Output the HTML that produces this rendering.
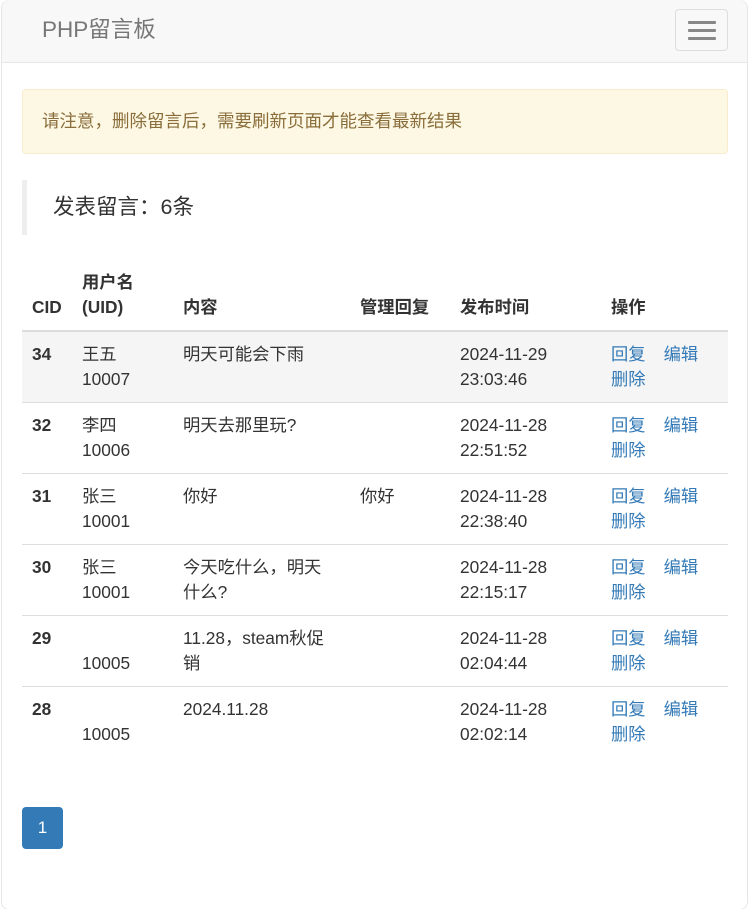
<!DOCTYPE html>
<html><head><meta charset="utf-8"><style>
*{box-sizing:border-box;margin:0;padding:0}
html,body{width:749px;height:909px;overflow:hidden;background:#fff}
body{font-family:"Liberation Sans","Noto Sans CJK SC",sans-serif;font-size:17.3px;color:#333;position:relative}
.frame{position:absolute;left:1px;top:0;width:747px;height:910px;border:1px solid #e6e6e6;border-radius:8px;overflow:hidden}
.nav{position:absolute;left:2px;top:0;width:745px;height:63px;background:#f8f8f8;border-bottom:1px solid #e7e7e7;border-radius:8px 8px 0 0}
.brand{position:absolute;left:40px;top:16px;font-size:22.5px;color:#777;line-height:28px}
.tog{position:absolute;left:673px;top:9px;width:53px;height:42px;border:1px solid #ddd;border-radius:4px}
.tog i{position:absolute;left:12px;width:28px;height:3px;background:#888;border-radius:1px}
.alert{position:absolute;left:22px;top:89px;width:706px;height:65px;background:#fcf8e3;border:1px solid #faebcc;border-radius:4px;color:#8a6d3b;padding:20px 19px;line-height:22px;font-size:17.5px;white-space:nowrap}
.bq{position:absolute;left:22px;top:180px;height:55px;width:300px;border-left:5px solid #eee;padding-left:26px;font-size:21.5px;line-height:55px}
.c{position:absolute;line-height:25px;white-space:nowrap}
.h{font-weight:bold}
.ln{position:absolute;left:22px;width:706px;height:1px;background:#ddd}
a{color:#337ab7;text-decoration:none}
.pg{position:absolute;left:22px;top:807px;width:41px;height:42px;background:#337ab7;border-radius:4px;color:#fff;text-align:center;line-height:42px;font-size:17px}
</style></head><body>
<div class="frame"></div>
<div class="nav"><div class="brand">PHP留言板</div><div class="tog"><i style="top:11px"></i><i style="top:19px"></i><i style="top:27px"></i></div></div>
<div class="alert">请注意，删除留言后，需要刷新页面才能查看最新结果</div>
<div class="bq">发表留言：6条</div>

<div class="c h" style="left:32px;top:295px">CID</div>
<div class="c h" style="left:82px;top:270px">用户名<br>(UID)</div>
<div class="c h" style="left:183px;top:295px">内容</div>
<div class="c h" style="left:360px;top:295px">管理回复</div>
<div class="c h" style="left:460px;top:295px">发布时间</div>
<div class="c h" style="left:611px;top:295px">操作</div>
<div class="ln" style="top:330px;height:2px"></div>
<div style="position:absolute;left:22px;top:332px;width:706px;height:70px;background:#f5f5f5"></div>

<div class="c h" style="left:32px;top:342px">34</div>
<div class="c" style="left:82px;top:342px">王五<br>10007</div>
<div class="c" style="left:183px;top:342px">明天可能会下雨</div>
<div class="c" style="left:460px;top:342px">2024-11-29<br>23:03:46</div>
<div class="c" style="left:611px;top:342px"><a>回复</a><a style="margin-left:18px">编辑</a><br><a>删除</a></div>
<div class="ln" style="top:402px"></div>

<div class="c h" style="left:32px;top:413px">32</div>
<div class="c" style="left:82px;top:413px">李四<br>10006</div>
<div class="c" style="left:183px;top:413px">明天去那里玩?</div>
<div class="c" style="left:460px;top:413px">2024-11-28<br>22:51:52</div>
<div class="c" style="left:611px;top:413px"><a>回复</a><a style="margin-left:18px">编辑</a><br><a>删除</a></div>
<div class="ln" style="top:473px"></div>

<div class="c h" style="left:32px;top:484px">31</div>
<div class="c" style="left:82px;top:484px">张三<br>10001</div>
<div class="c" style="left:183px;top:484px">你好</div>
<div class="c" style="left:360px;top:484px">你好</div>
<div class="c" style="left:460px;top:484px">2024-11-28<br>22:38:40</div>
<div class="c" style="left:611px;top:484px"><a>回复</a><a style="margin-left:18px">编辑</a><br><a>删除</a></div>
<div class="ln" style="top:544px"></div>

<div class="c h" style="left:32px;top:555px">30</div>
<div class="c" style="left:82px;top:555px">张三<br>10001</div>
<div class="c" style="left:183px;top:555px">今天吃什么，明天<br>什么?</div>
<div class="c" style="left:460px;top:555px">2024-11-28<br>22:15:17</div>
<div class="c" style="left:611px;top:555px"><a>回复</a><a style="margin-left:18px">编辑</a><br><a>删除</a></div>
<div class="ln" style="top:615px"></div>

<div class="c h" style="left:32px;top:626px">29</div>
<div class="c" style="left:82px;top:626px">&nbsp;<br>10005</div>
<div class="c" style="left:183px;top:626px">11.28，steam秋促<br>销</div>
<div class="c" style="left:460px;top:626px">2024-11-28<br>02:04:44</div>
<div class="c" style="left:611px;top:626px"><a>回复</a><a style="margin-left:18px">编辑</a><br><a>删除</a></div>
<div class="ln" style="top:686px"></div>

<div class="c h" style="left:32px;top:697px">28</div>
<div class="c" style="left:82px;top:697px">&nbsp;<br>10005</div>
<div class="c" style="left:183px;top:697px">2024.11.28</div>
<div class="c" style="left:460px;top:697px">2024-11-28<br>02:02:14</div>
<div class="c" style="left:611px;top:697px"><a>回复</a><a style="margin-left:18px">编辑</a><br><a>删除</a></div>

<div class="pg">1</div>
</body></html>
